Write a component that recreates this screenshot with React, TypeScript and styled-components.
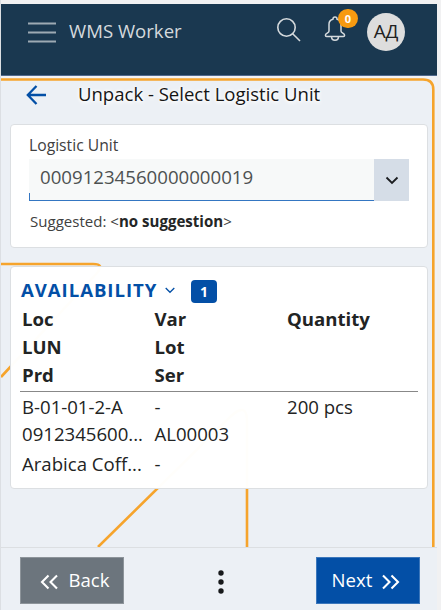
import React from "react";
import styled, { createGlobalStyle } from "styled-components";

const Global = createGlobalStyle`
  * { box-sizing: border-box; }
  body { margin: 0; background: #f1f1f2; font-family: "Open Sans", "Noto Sans", sans-serif; color: #212529; }
`;

const Frame = styled.div`
  width: 441px;
  height: 610px;
  padding: 4px 4px 0 1px;
  background: #f1f1f2;
  display: flex;
  flex-direction: column;
  overflow: hidden;
  position: relative;
  box-shadow: inset 1px 0 #dcdfe3;
`;

const Header = styled.header`
  height: 72px;
  flex: none;
  width: 436px;
  background: #1a3850;
  border-bottom: 1px solid #51698c;
  display: flex;
  align-items: flex-start;
  padding: 0 0 0 26px;
`;

const Brand = styled.div`
  width: 221px;
  height: 54px;
  padding-left: 14px;
  line-height: 54px;
  font-size: 18.6px;
  color: #d5dadd;
  white-space: nowrap;
`;

const MenuIcon = styled.svg`
  width: 29px;
  height: 22px;
  margin: 18px -1px 0 0;
`;

const SearchIcon = styled.svg`
  width: 25px;
  height: 25px;
  margin-top: 13px;
`;

const BellWrap = styled.div`
  position: relative;
  margin: 12px 0 0 23px;
  width: 22px;
  height: 26px;
`;

const Counter = styled.span`
  position: absolute;
  left: 14px;
  top: -7px;
  width: 20px;
  height: 19px;
  border-radius: 10px;
  background: #f79a10;
  color: #fff;
  font-size: 11px;
  font-weight: 700;
  line-height: 19px;
  text-align: center;
`;

const Avatar = styled.div`
  margin: 9px 0 0 21px;
  width: 38px;
  height: 38px;
  border-radius: 50%;
  background: #dddddd;
  color: #212121;
  font-size: 18.8px;
  font-weight: 400;
  line-height: 37px;
  text-align: center;
`;

const Content = styled.main`
  position: relative;
  height: 471px;
  flex: none;
  width: 436px;
  padding: 0 9px 0 9px;
  background: #ecf0f5;
  display: flex;
  flex-direction: column;
`;

const Decoration = styled.svg`
  position: absolute;
  left: 0;
  top: 0;
  width: 436px;
  height: 471px;
`;

const TitleRow = styled.div`
  position: relative;
  height: 48px;
  flex: none;
  display: flex;
  align-items: flex-start;
  padding-left: 16px;
`;

const BackArrow = styled.svg`
  width: 22px;
  height: 20px;
  margin-top: 9px;
`;

const Title = styled.h1`
  margin: 4px 0 0 30px;
  font-size: 18.55px;
  font-weight: 400;
  line-height: 28px;
  color: #151515;
  text-shadow: 0 0 3px #fff, 1px 2px 4px #fff, 0 0 5px #fff;
  white-space: nowrap;
`;

const Card = styled.section<{ $height: number }>`
  position: relative;
  height: ${(p) => p.$height}px;
  flex: none;
  background: rgba(255, 255, 255, 0.985);
  border: 1px solid #dcdfe2;
  border-radius: 4px;
  margin-bottom: 18px;
`;

const UnitCard = styled(Card)`
  padding: 10px 18px 0 18px;
`;

const Label = styled.label`
  display: block;
  font-size: 15.7px;
  line-height: 21px;
  height: 24px;
  color: #404040;
`;

const Combo = styled.div`
  display: flex;
  height: 42px;
`;

const Field = styled.div`
  flex: 1;
  background: linear-gradient(#3476c2, #3476c2) left bottom / 1px 7px no-repeat, #f7f9f9;
  border-bottom: 1px solid #3476c2;
  padding-left: 11px;
  font-size: 18.65px;
  line-height: 36px;
  color: #4d5151;
`;

const DropButton = styled.button`
  width: 35px;
  padding: 0;
  border: 0;
  background: #d5dde7;
  display: flex;
  align-items: center;
  justify-content: center;
`;

const Hint = styled.div`
  margin-top: 9px;
  padding-left: 1px;
  font-size: 15.05px;
  line-height: 22px;
  color: #404040;
  b { color: #242626; }
`;

const StockCard = styled(Card)`
  padding: 9px 9px 0;
`;

const SectionHead = styled.div`
  height: 29px;
  display: flex;
  align-items: center;
  color: #034fa6;
`;

const SectionTitle = styled.h2`
  margin: -2px 0 0 1px;
  width: 144px;
  font-size: 18.6px;
  font-weight: 700;
  line-height: 28px;
  letter-spacing: 0.95px;
`;

const Pill = styled.span`
  margin-left: 16px;
  width: 26px;
  height: 23px;
  margin-top: 2px;
  border-radius: 4px;
  background: #034fa6;
  color: #fff;
  font-size: 14px;
  font-weight: 700;
  line-height: 23px;
  text-align: center;
`;

const Grid = styled.div<{ $head?: boolean }>`
  display: grid;
  grid-template-columns: 132.5px 132.5px 1fr;
  grid-template-rows: ${(p) => (p.$head ? "28px 28px 28px" : "27px 30px 29px")};
  padding-left: 2px;
  font-size: 18.6px;
  line-height: 28px;
  font-weight: ${(p) => (p.$head ? 700 : 400)};
  color: #222424;
  height: ${(p) => (p.$head ? 87 : 89)}px;
  padding-top: ${(p) => (p.$head ? 0 : 1)}px;
  border-bottom: ${(p) => (p.$head ? "1px solid #888" : "0")};
`;

const Cell = styled.div`
  white-space: nowrap;
`;

const Footer = styled.footer`
  flex: none;
  width: 436px;
  height: 63px;
  background: #ecf0f5;
  border-top: 1px solid #dcdfe2;
  display: flex;
  align-items: flex-start;
  padding: 9px 17px 0 19px;
  justify-content: space-between;
`;

const MoreIcon = styled.svg`
  width: 8px;
  height: 24px;
  margin: 13px 0 0 1px;
`;

const Action = styled.button<{ $primary?: boolean }>`
  width: 104px;
  height: 47px;
  padding: ${(p) => (p.$primary ? "0 4px 2px 0" : "0 0 2px 6px")};
  border: 1px solid ${(p) => (p.$primary ? "#3c77bb" : "#8d949a")};
  background: ${(p) => (p.$primary ? "#034fa6" : "#6c757d")};
  color: #fff;
  font: 400 18.6px/43px "Open Sans", "Noto Sans", sans-serif;
  display: flex;
  align-items: center;
  justify-content: center;
  gap: 10px;
  svg { position: relative; top: 2px; }
`;

const Chevrons = ({ flip = false }: { flip?: boolean }) => (
  <svg width="18" height="16" viewBox="0 0 18 16" fill="none" stroke="#fff" strokeWidth="2.1">
    <path d={flip ? "M1 1.500l6.500 6.500L1 14.500M9.500 1.500L16 8l-6.500 6.500" : "M8.500 1.500L2 8l6.500 6.500M17 1.500L10.500 8l6.500 6.500"} />
  </svg>
);

const headings = ["Loc", "Var", "Quantity", "LUN", "Lot", "", "Prd", "Ser", ""];
const stock = ["B-01-01-2-A", "-", "200 pcs", "0912345600...", "AL00003", "", "Arabica Coff...", "-", ""];

export default function App() {
  return (
    <>
      <Global />
      <Frame>
        <Header>
          <MenuIcon viewBox="0 0 29 22" stroke="#9daab3" strokeWidth="2">
            <path d="M1 1.5h28M1 10.5h28M1 19.5h28" />
          </MenuIcon>
          <Brand>WMS Worker</Brand>
          <SearchIcon viewBox="0 0 25 25" fill="none" stroke="#d5dadd" strokeWidth="1.6">
            <circle cx="10.5" cy="10.5" r="8.7" />
            <path d="M16.7 16.7L24 24" />
          </SearchIcon>
          <BellWrap>
            <svg width="22" height="26" viewBox="0 0 22 26" fill="none" stroke="#d5dadd" strokeWidth="1.5" strokeLinejoin="round">
              <path d="M9 3.300V3a2 2 0 0 1 4 0v.3c2.700.6 4 2.500 4 5V15c0 2 3.600 2.200 3.600 4.200 0 .8-.4 1.200-1.200 1.200H2.600c-.8 0-1.200-.4-1.200-1.200C1.400 17.200 5 17 5 15V8.300c0-2.500 1.300-4.400 4-5zM7.500 20.500c0 5 7 5 7 0" />
            </svg>
            <Counter>0</Counter>
          </BellWrap>
          <Avatar>АД</Avatar>
        </Header>
        <Content>
          <Decoration viewBox="0 0 436 471" fill="none">
            <path d="M0 3.500H422Q432 3.500 432 13.500V471H436V0H0Z" fill="#f1f2f5" />
            <g stroke="#f6a42c" strokeWidth="2.600">
              <path d="M0 3.500H422Q432.300 3.500 432.300 13.500V471" />
              <path d="M0 188H92Q104 188 96 197L0 301" />
              <path d="M97 471L229 341Q246 325 246 345V471" />
            </g>
          </Decoration>
          <TitleRow>
            <BackArrow viewBox="0 0 22 20" fill="none" stroke="#034fa6" strokeWidth="2.300">
              <path d="M20 10H2M10.500 1L1.800 10l8.700 9" />
            </BackArrow>
            <Title>Unpack - Select Logistic Unit</Title>
          </TitleRow>
          <UnitCard $height={124}>
            <Label>Logistic Unit</Label>
            <Combo>
              <Field>00091234560000000019</Field>
              <DropButton>
                <svg width="14" height="9" viewBox="0 0 14 9" fill="none" stroke="#1b1d20" strokeWidth="1.800">
                  <path d="M1.500 1.500L7 7l5.500-5.500" />
                </svg>
              </DropButton>
            </Combo>
            <Hint>Suggested: &lt;<b>no suggestion</b>&gt;</Hint>
          </UnitCard>
          <StockCard $height={223}>
            <SectionHead>
              <SectionTitle>AVAILABILITY</SectionTitle>
              <svg width="10" height="7" viewBox="0 0 10 7" fill="none" stroke="#034fa6" strokeWidth="1.300">
                <path d="M.7 1L5 5.300 9.300 1" />
              </svg>
              <Pill>1</Pill>
            </SectionHead>
            <Grid $head>{headings.map((t, i) => <Cell key={i}>{t}</Cell>)}</Grid>
            <Grid>{stock.map((t, i) => <Cell key={i}>{t}</Cell>)}</Grid>
          </StockCard>
        </Content>
        <Footer>
          <Action><Chevrons /> Back</Action>
          <MoreIcon viewBox="0 0 8 24" fill="#17191b">
            <circle cx="4" cy="3" r="2.700" /><circle cx="4" cy="12" r="2.700" /><circle cx="4" cy="21" r="2.700" />
          </MoreIcon>
          <Action $primary>Next <Chevrons flip /></Action>
        </Footer>
      </Frame>
    </>
  );
}
